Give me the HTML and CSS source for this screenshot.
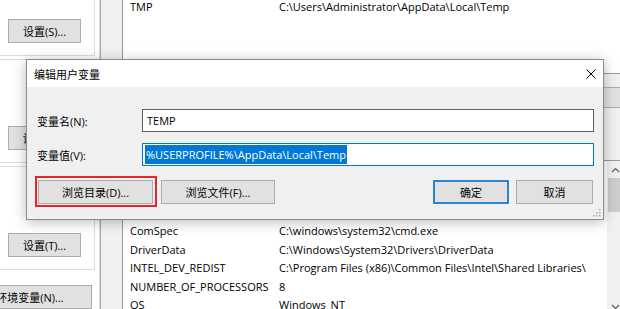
FILE: index.html
```html
<!DOCTYPE html>
<html lang="zh-CN">
<head>
<meta charset="utf-8">
<title>编辑用户变量</title>
<link rel="stylesheet" href="styles.css">
</head>
<body>
<div class="sysprops">
  <div class="group"><button class="btn set-btn">设置(S)...</button></div>
  <div class="group"><button class="btn set-btn">设置(E)...</button></div>
  <div class="group"><button class="btn set-btn">设置(T)...</button></div>
  <button class="btn env-btn">环境变量(N)...</button>
</div>

<div class="envwin">
  <div class="list upper">
    <div class="row"><span>TMP</span><span>C:\Users\Administrator\AppData\Local\Temp</span></div>
  </div>
  <div class="envbtns">
    <button class="btn env-act">删除(D)</button>
  </div>
  <div class="list lower">
    <div class="rows">
      <div class="row"><span>ComSpec</span><span>C:\windows\system32\cmd.exe</span></div>
      <div class="row"><span>DriverData</span><span>C:\Windows\System32\Drivers\DriverData</span></div>
      <div class="row"><span>INTEL_DEV_REDIST</span><span>C:\Program Files (x86)\Common Files\Intel\Shared Libraries\</span></div>
      <div class="row"><span>NUMBER_OF_PROCESSORS</span><span>8</span></div>
      <div class="row"><span>OS</span><span>Windows_NT</span></div>
    </div>
    <div class="scroll">
      <div class="sb-arrow"><svg width="9" height="6" viewBox="0 0 9 6"><path d="M1 5 L4.5 1.5 L8 5" fill="none" stroke="#606060" stroke-width="1.2"/></svg></div>
      <div class="sb-thumb"></div>
      <div class="sb-track"></div>
      <div class="sb-arrow"><svg width="9" height="6" viewBox="0 0 9 6"><path d="M1 1 L4.5 4.5 L8 1" fill="none" stroke="#606060" stroke-width="1.2"/></svg></div>
    </div>
  </div>
</div>

<div class="dialog">
  <div class="titlebar">
    <span class="title">编辑用户变量</span>
    <svg class="close" width="10" height="10" viewBox="0 0 10 10"><path d="M0.5 0.5 L9.5 9.5 M9.5 0.5 L0.5 9.5" stroke="#000" stroke-width="1"/></svg>
  </div>
  <div class="dbody">
    <div class="field">
      <span class="label">变量名(N):</span>
      <div class="input"><span>TEMP</span></div>
    </div>
    <div class="field">
      <span class="label">变量值(V):</span>
      <div class="input focus"><span class="sel">%USERPROFILE%\AppData\Local\Temp</span></div>
    </div>
    <div class="actions">
      <button class="btn browse-dir hl">浏览目录(D)...</button>
      <button class="btn browse-file">浏览文件(F)...</button>
      <button class="btn ok">确定</button>
      <button class="btn cancel">取消</button>
    </div>
  </div>
  <svg class="grip" width="8" height="8" viewBox="0 0 8 8">
    <rect x="6" y="0" width="1.5" height="1.5" fill="#b0b0b0"/>
    <rect x="3" y="3" width="1.5" height="1.5" fill="#b0b0b0"/>
    <rect x="6" y="3" width="1.5" height="1.5" fill="#b0b0b0"/>
    <rect x="0" y="6" width="1.5" height="1.5" fill="#b0b0b0"/>
    <rect x="3" y="6" width="1.5" height="1.5" fill="#b0b0b0"/>
    <rect x="6" y="6" width="1.5" height="1.5" fill="#b0b0b0"/>
  </svg>
</div>
</body>
</html>
```
FILE: styles.css
```css
* { box-sizing: border-box; }
html, body { margin: 0; padding: 0; }
body {
  width: 620px;
  height: 309px;
  overflow: hidden;
  position: relative;
  background: #fff;
  font-family: "Open Sans", "Noto Sans CJK SC", sans-serif;
  font-size: 11px;
  color: #000;
}

.btn {
  font: inherit;
  color: #000;
  background: #e1e1e1;
  border: 1px solid #adadad;
  height: 24px;
  padding: 0;
  display: flex;
  align-items: center;
  justify-content: center;
  white-space: nowrap;
}

/* background: system properties tab page */
.sysprops {
  position: absolute;
  left: -20px;
  top: -48px;
  width: 120px;
  height: 420px;
  background: #fff;
  border-right: 1px solid #dadada;
  padding-left: 10px;
  display: flex;
  flex-direction: column;
  gap: 3px;
}
.group {
  width: 105px;
  height: 104px;
  flex: none;
  border: 1px solid #dcdcdc;
  padding: 66px 0 0 17px;
}
.set-btn { width: 73px; }
.env-btn {
  width: 124px;
  margin-left: -22px;
  margin-top: 12px;
  flex: none;
}

/* background: environment variables window */
.envwin {
  position: absolute;
  left: 100px;
  top: -40px;
  width: 540px;
  height: 420px;
  background: #f0f0f0;
  border-left: 1px solid #a8a8a8;
  padding-left: 21px;
}
.list {
  width: 503px;
  background: #fff;
  border: 1px solid #9a9a9a;
}
.upper {
  height: 114px;
  padding-top: 37px;
}
.row {
  display: grid;
  grid-template-columns: 149px 1fr;
  height: 18.5px;
  line-height: 18.5px;
  padding-left: 7px;
  white-space: nowrap;
}
.envbtns {
  width: 503px;
  margin-top: 13px;
  display: flex;
  justify-content: flex-end;
}
.env-act { width: 85px; height: 21px; }
.lower {
  margin-top: 52px;
  height: 156px;
  display: flex;
}
.rows {
  flex: 1;
  padding-top: 61px;
}
.scroll {
  width: 17px;
  background: #f0f0f0;
  display: flex;
  flex-direction: column;
}
.sb-arrow {
  height: 17px;
  display: flex;
  align-items: center;
  justify-content: center;
}
.sb-thumb { height: 34px; background: #cdcdcd; margin: 0 0 0 1px; }
.sb-track { flex: 1; }

/* foreground dialog */
.dialog {
  position: absolute;
  left: 26px;
  top: 59px;
  width: 578px;
  height: 161px;
  background: #f0f0f0;
  border: 1px solid #8a8a8a;
  box-shadow: 0 2px 12px rgba(0, 0, 0, 0.28);
}
.titlebar {
  height: 27px;
  background: #fff;
  display: flex;
  align-items: center;
  justify-content: space-between;
  padding: 0 7px;
}
.dbody { padding: 22px 9px 0 10px; }
.field {
  display: grid;
  grid-template-columns: 105px 1fr;
  align-items: center;
  height: 23px;
}
.field + .field { margin-top: 11px; }
.input {
  height: 23px;
  background: #fff;
  border: 1px solid #5e5e5e;
  padding-left: 4px;
  display: flex;
  align-items: center;
  white-space: nowrap;
}
.input.focus {
  border-color: #0078d7;
  padding-left: 2px;
}
.sel {
  background: #0078d7;
  color: #fff;
  padding: 0 1px;
  height: 19px;
  line-height: 19px;
}
.actions {
  display: flex;
  margin-top: 14px;
  height: 24px;
}
.browse-dir { width: 115px; margin-left: 1px; }
.browse-file { width: 114px; margin-left: 8px; }
.ok {
  width: 76px;
  margin-left: auto;
  border: 2px solid #2a84d8;
}
.cancel { width: 77px; margin-left: 7px; margin-right: 1px; }
.hl { position: relative; }
.hl::after {
  content: "";
  position: absolute;
  left: -4px;
  top: -5px;
  right: -5px;
  bottom: -4px;
  border: 2px solid #e3262c;
}
.grip {
  position: absolute;
  right: 2px;
  bottom: 2px;
}
```
